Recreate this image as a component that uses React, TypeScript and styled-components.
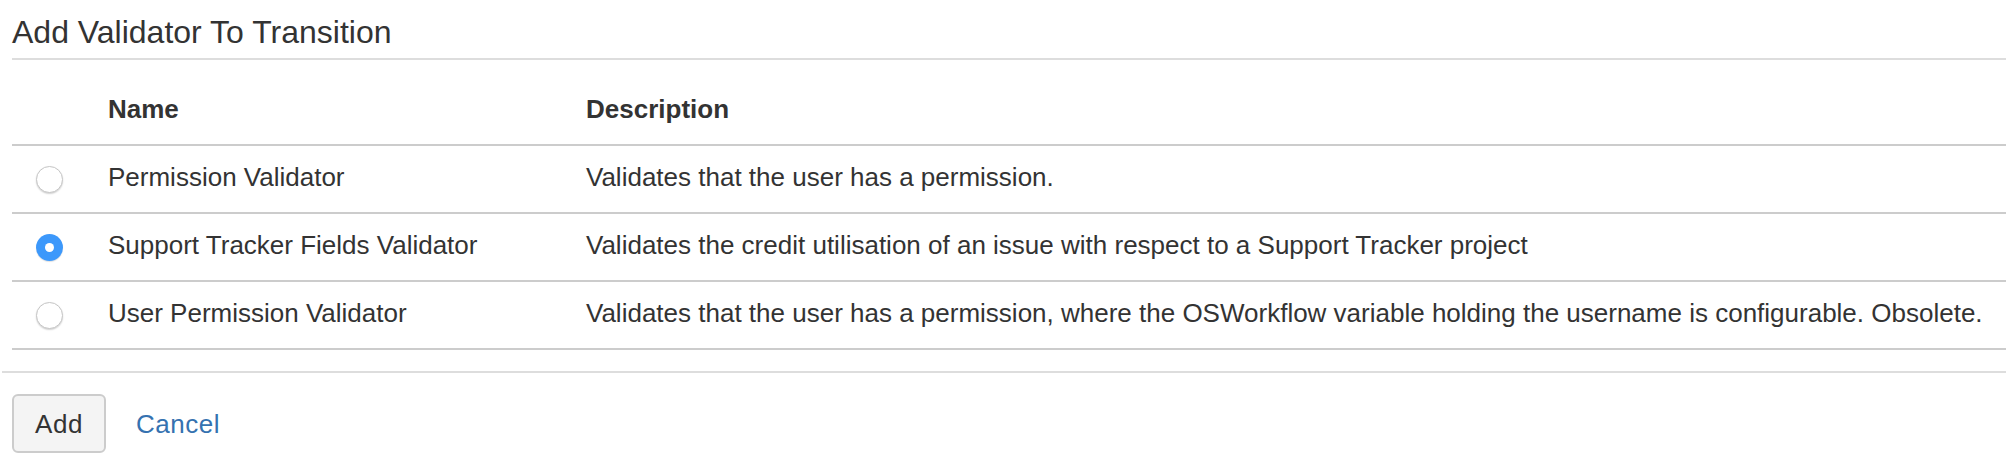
import React from "react";
import styled, { createGlobalStyle } from "styled-components";

const GlobalStyle = createGlobalStyle`
  html, body {
    margin: 0;
    padding: 0;
    background: #ffffff;
  }
  body {
    font-family: "Liberation Sans", Arial, Helvetica, sans-serif;
    color: #333333;
  }
`;

const Page = styled.div`
  padding-left: 12px;
`;

const Title = styled.h2`
  margin: 0;
  padding: 14px 0 8px;
  font-size: 32px;
  line-height: 36px;
  font-weight: normal;
  color: #333333;
  border-bottom: 2px solid #dddddd;
`;

const Table = styled.table`
  width: 100%;
  margin-top: 20px;
  border-collapse: collapse;
  font-size: 26px;
  line-height: 34px;
`;

const HeadCell = styled.th<{ $w?: number }>`
  text-align: left;
  font-weight: bold;
  padding: 12px 0 18px;
  border-bottom: 2px solid #cccccc;
  width: ${(p) => (p.$w ? `${p.$w}px` : "auto")};
  color: #333333;
`;

const Row = styled.tr`
  border-bottom: 2px solid #cccccc;
`;

const Cell = styled.td`
  padding: 14px 0 18px;
  vertical-align: top;
  white-space: nowrap;
`;

const RadioCell = styled.td`
  padding: 0 0 0 24px;
  vertical-align: middle;
`;

const Radio = styled.span<{ $checked?: boolean }>`
  display: flex;
  align-items: center;
  justify-content: center;
  box-sizing: border-box;
  width: 27px;
  height: 27px;
  border-radius: 50%;
  background: ${(p) => (p.$checked ? "#3c98fb" : "#ffffff")};
  border: ${(p) => (p.$checked ? "none" : "1.5px solid #c6c6c6")};
  box-shadow: ${(p) =>
    p.$checked ? "0 1px 1px rgba(0,0,0,0.12)" : "0 1px 1.5px rgba(0,0,0,0.18)"};
`;

const Dot = styled.span`
  width: 9px;
  height: 9px;
  border-radius: 50%;
  background: #ffffff;
`;

const Footer = styled.div`
  margin: 21px 0 0 -10px;
  padding: 21px 0 0 10px;
  border-top: 2px solid #dddddd;
  display: flex;
  align-items: center;
  gap: 30px;
`;

const Button = styled.button`
  box-sizing: border-box;
  width: 94px;
  height: 59px;
  padding: 0;
  border: 2px solid #cccccc;
  border-radius: 6px;
  background: #f4f4f4;
  color: #333333;
  font-family: "Liberation Sans", Arial, Helvetica, sans-serif;
  font-size: 26px;
  line-height: 34px;
  letter-spacing: 0.5px;
`;

const CancelLink = styled.a`
  color: #3572b0;
  text-decoration: none;
  font-size: 26px;
  line-height: 34px;
  letter-spacing: 0.5px;
`;

const validators = [
  {
    name: "Permission Validator",
    description: "Validates that the user has a permission.",
    checked: false,
  },
  {
    name: "Support Tracker Fields Validator",
    description:
      "Validates the credit utilisation of an issue with respect to a Support Tracker project",
    checked: true,
  },
  {
    name: "User Permission Validator",
    description:
      "Validates that the user has a permission, where the OSWorkflow variable holding the username is configurable. Obsolete.",
    checked: false,
  },
];

export default function App() {
  return (
    <Page>
      <GlobalStyle />
      <Title>Add Validator To Transition</Title>
      <Table>
        <thead>
          <tr>
            <HeadCell $w={96} />
            <HeadCell $w={478}>Name</HeadCell>
            <HeadCell>Description</HeadCell>
          </tr>
        </thead>
        <tbody>
          {validators.map((v) => (
            <Row key={v.name}>
              <RadioCell>
                <Radio $checked={v.checked}>{v.checked && <Dot />}</Radio>
              </RadioCell>
              <Cell>{v.name}</Cell>
              <Cell>{v.description}</Cell>
            </Row>
          ))}
        </tbody>
      </Table>
      <Footer>
        <Button>Add</Button>
        <CancelLink href="#">Cancel</CancelLink>
      </Footer>
    </Page>
  );
}
